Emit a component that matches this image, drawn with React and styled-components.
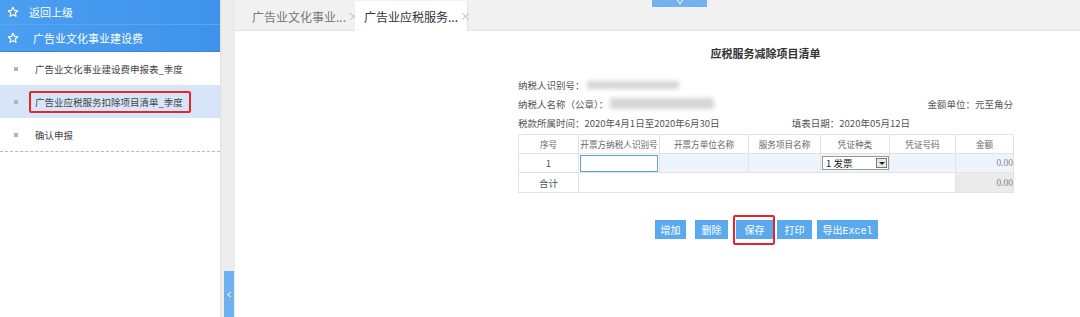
import React from "react";
import styled, { createGlobalStyle } from "styled-components";

const Global = createGlobalStyle`
  html, body { margin: 0; padding: 0; background: #fff; }
  body { font-family: "Noto Sans CJK SC", "Noto Sans", sans-serif; }
  * { box-sizing: border-box; }
`;

const Page = styled.div`
  display: flex;
  width: 1080px;
  height: 317px;
  overflow: hidden;
`;

const Sidebar = styled.div`
  width: 220px;
  flex: none;
  background: #fff;
  display: flex;
  flex-direction: column;
`;

const MenuHead = styled.div`
  height: ${(p) => p.$h}px;
  display: flex;
  align-items: center;
  padding-left: 7px;
  gap: ${(p) => p.$gap}px;
  color: #fff;
  font-size: 11px;
  background: linear-gradient(90deg, #4b9ff1 0%, #3f92ea 100%);
  border-bottom: 1px solid ${(p) => p.$line};
`;

const Star = () => (
  <svg width="12" height="12" viewBox="0 0 24 24" fill="none" stroke="#fff" strokeWidth="2.4" strokeLinejoin="round">
    <path d="M12 2.5l2.9 6.1 6.6.8-4.9 4.6 1.3 6.6L12 17.3l-5.9 3.3 1.3-6.6-4.9-4.6 6.6-.8z" />
  </svg>
);

const SubList = styled.div`
  border-bottom: 1px dashed #b8b8b8;
`;

const SubItem = styled.div`
  height: 33px;
  display: flex;
  align-items: center;
  padding-left: 14px;
  font-size: 9.5px;
  color: #444;
  background: ${(p) => (p.$active ? "#d6e6f8" : "#fff")};
`;

const Bullet = styled.span`
  width: 4px;
  height: 4px;
  background: #b5b5b5;
  margin-right: 11px;
  flex: none;
`;

const SubLabel = styled.span`
  padding: ${(p) => (p.$boxed ? "2px 6px 2px 4px" : "2px 6px")};
  border: ${(p) => (p.$boxed ? "2px solid #e8262a" : "none")};
  border-radius: 2px;
`;

const Splitter = styled.div`
  width: 15px;
  flex: none;
  background: #ececec;
  border-left: 1px solid #e0e0e0;
  display: flex;
  flex-direction: column;
  justify-content: flex-end;
  align-items: center;
`;

const CollapseBtn = styled.div`
  width: 10px;
  height: 46px;
  background: #6eb0f0;
  display: flex;
  align-items: center;
  justify-content: center;
  margin-left: 2px;
`;

const Main = styled.div`
  flex: 1;
  display: flex;
  flex-direction: column;
  min-width: 0;
`;

const TabBar = styled.div`
  position: relative;
  height: 31px;
  flex: none;
  background: #f1f1f1;
  border-bottom: 1px solid #e3e3e3;
  display: flex;
  align-items: flex-end;
`;

const Tab = styled.div`
  height: 30px;
  margin-bottom: -1px;
  display: flex;
  align-items: center;
  font-size: 12px;
  padding: 0 6px 0 ${(p) => (p.$active ? 9 : 17)}px;
  margin-right: ${(p) => (p.$active ? 0 : 5)}px;
  width: ${(p) => (p.$active ? 113 : 115)}px;
  color: ${(p) => (p.$active ? "#333" : "#777")};
  background: ${(p) => (p.$active ? "#fff" : "transparent")};
  border-right: ${(p) => (p.$active ? "1px solid #e3e3e3" : "none")};
  white-space: nowrap;
`;

const TabClose = styled.span`
  color: #bbb;
  font-size: 11px;
  margin-left: 2px;
`;

const TopToggle = styled.div`
  position: absolute;
  left: 417px;
  top: 0;
  width: 55px;
  height: 7px;
  background: #74b1f0;
  display: flex;
  justify-content: center;
  align-items: flex-start;
`;

const Content = styled.div`
  flex: 1;
  background: #fff;
  padding: 12px 0 0 283px;
`;

const Form = styled.div`
  width: 495px;
`;

const Title = styled.div`
  text-align: center;
  font-size: 11px;
  font-weight: bold;
  color: #333;
  height: 20px;
  line-height: 20px;
  margin-bottom: 12px;
`;

const InfoRow = styled.div`
  display: flex;
  align-items: center;
  justify-content: space-between;
  height: 19px;
  font-size: 9.5px;
  color: #555;
`;

const InfoLeft = styled.div`
  display: flex;
  align-items: center;
`;

const Blur = styled.span`
  display: inline-block;
  width: ${(p) => p.$w}px;
  height: ${(p) => p.$h}px;
  background: #d6d6d6;
  filter: blur(2px);
  margin-left: 2px;
`;

const DateRight = styled.span`
  margin-right: 103px;
`;

const Table = styled.table`
  border-collapse: collapse;
  width: 495px;
  margin-top: 2px;
  font-size: 9.5px;
  color: #555;
  table-layout: fixed;
`;

const Th = styled.th`
  font-weight: normal;
  font-size: 8.6px;
  color: #666;
  height: 19px;
  border: 1px solid #e3e3e3;
  padding: 0;
  white-space: nowrap;
  overflow: hidden;
`;

const Td = styled.td`
  height: ${(p) => (p.$h ? p.$h : 19)}px;
  border: 1px solid #e3e3e3;
  padding: 0 ${(p) => (p.$right ? 0 : 1)}px 0 1px;
  text-align: ${(p) => (p.$right ? "right" : "center")};
  background: ${(p) => p.$bg || "#fff"};
  color: ${(p) => (p.$right ? "#888" : "#555")};
  font-family: ${(p) => (p.$right ? '"Liberation Serif", serif' : "inherit")};
`;

const CellInput = styled.div`
  height: 17px;
  border: 1px solid #5d9fd9;
  background: #fff;
`;

const Select = styled.div`
  width: 67px;
  height: 14px;
  border: 1px solid #999;
  background: #fff;
  display: flex;
  align-items: center;
  justify-content: space-between;
  padding-left: 3px;
  font-size: 9.5px;
  color: #222;
`;

const SelectArrow = styled.span`
  width: 11px;
  height: 10px;
  margin-right: 1px;
  border: 1px solid #777;
  background: #e8e8e8;
  display: flex;
  align-items: center;
  justify-content: center;
  &::after {
    content: "";
    border-left: 3px solid transparent;
    border-right: 3px solid transparent;
    border-top: 3px solid #222;
  }
`;

const Buttons = styled.div`
  display: flex;
  margin: 27px 0 0 137px;
  align-items: center;
`;

const Btn = styled.div`
  position: relative;
  height: 19px;
  width: ${(p) => p.$w}px;
  margin-left: ${(p) => p.$ml || 0}px;
  background: #5aa9ee;
  color: #fff;
  font-size: 10px;
  display: flex;
  align-items: center;
  justify-content: center;
  font-family: "Liberation Mono", "Noto Sans CJK SC", monospace;
  ${(p) =>
    p.$marked &&
    `
    &::after {
      content: "";
      position: absolute;
      left: -3px;
      right: -2px;
      top: -5px;
      bottom: -6px;
      border: 2px solid #e8262a;
      border-radius: 2px;
    }
  `}
`;

const cols = [60, 81, 89, 72, 69, 66, 58];
const headers = ["序号", "开票方纳税人识别号", "开票方单位名称", "服务项目名称", "凭证种类", "凭证号码", "金额"];

export default function App() {
  return (
    <Page>
      <Global />
      <Sidebar>
        <MenuHead $h={25} $gap={10} $line="#5aa6ee">
          <Star />
          返回上级
        </MenuHead>
        <MenuHead $h={27} $gap={14} $line="#3a84d6">
          <Star />
          广告业文化事业建设费
        </MenuHead>
        <SubList>
          <SubItem>
            <Bullet />
            <SubLabel>广告业文化事业建设费申报表_季度</SubLabel>
          </SubItem>
          <SubItem $active>
            <Bullet />
            <SubLabel $boxed>广告业应税服务扣除项目清单_季度</SubLabel>
          </SubItem>
          <SubItem>
            <Bullet />
            <SubLabel>确认申报</SubLabel>
          </SubItem>
        </SubList>
      </Sidebar>
      <Splitter>
        <CollapseBtn>
          <svg width="6" height="7" viewBox="0 0 6 7" fill="none" stroke="#fff" strokeWidth="1">
            <path d="M5 1L1.5 3.5L5 6" />
          </svg>
        </CollapseBtn>
      </Splitter>
      <Main>
        <TabBar>
          <Tab>
            广告业文化事业...<TabClose>×</TabClose>
          </Tab>
          <Tab $active>
            广告业应税服务...<TabClose>×</TabClose>
          </Tab>
          <TopToggle>
            <svg width="6" height="5" viewBox="0 0 6 5" fill="none" stroke="#fff" strokeWidth="1">
              <path d="M0.5 0L3 4L5.5 0" />
            </svg>
          </TopToggle>
        </TabBar>
        <Content>
          <Form>
            <Title>应税服务减除项目清单</Title>
            <InfoRow>
              <InfoLeft>
                纳税人识别号：<Blur $w={92} $h={8} />
              </InfoLeft>
            </InfoRow>
            <InfoRow>
              <InfoLeft>
                纳税人名称（公章）：<Blur $w={104} $h={11} />
              </InfoLeft>
              <span>金额单位：元至角分</span>
            </InfoRow>
            <InfoRow>
              <span>税款所属时间：2020年4月1日至2020年6月30日</span>
              <DateRight>填表日期：2020年05月12日</DateRight>
            </InfoRow>
            <Table>
              <colgroup>
                {cols.map((w, i) => (
                  <col key={i} style={{ width: w }} />
                ))}
              </colgroup>
              <thead>
                <tr>
                  {headers.map((h) => (
                    <Th key={h}>{h}</Th>
                  ))}
                </tr>
              </thead>
              <tbody>
                <tr>
                  <Td>1</Td>
                  <Td>
                    <CellInput />
                  </Td>
                  <Td $bg="#eef4fc" />
                  <Td $bg="#eef4fc" />
                  <Td $bg="#eef4fc">
                    <Select>
                      1 发票
                      <SelectArrow />
                    </Select>
                  </Td>
                  <Td $bg="#eef4fc" />
                  <Td $bg="#eef4fc" $right>
                    0.00
                  </Td>
                </tr>
                <tr>
                  <Td $h={20}>合计</Td>
                  <Td colSpan={5} />
                  <Td $bg="#ebebeb" $right>
                    0.00
                  </Td>
                </tr>
              </tbody>
            </Table>
            <Buttons>
              <Btn $w={31}>增加</Btn>
              <Btn $w={33} $ml={9}>删除</Btn>
              <Btn $w={37} $ml={8} $marked>保存</Btn>
              <Btn $w={35} $ml={4}>打印</Btn>
              <Btn $w={61} $ml={5}>导出Excel</Btn>
            </Buttons>
          </Form>
        </Content>
      </Main>
    </Page>
  );
}
